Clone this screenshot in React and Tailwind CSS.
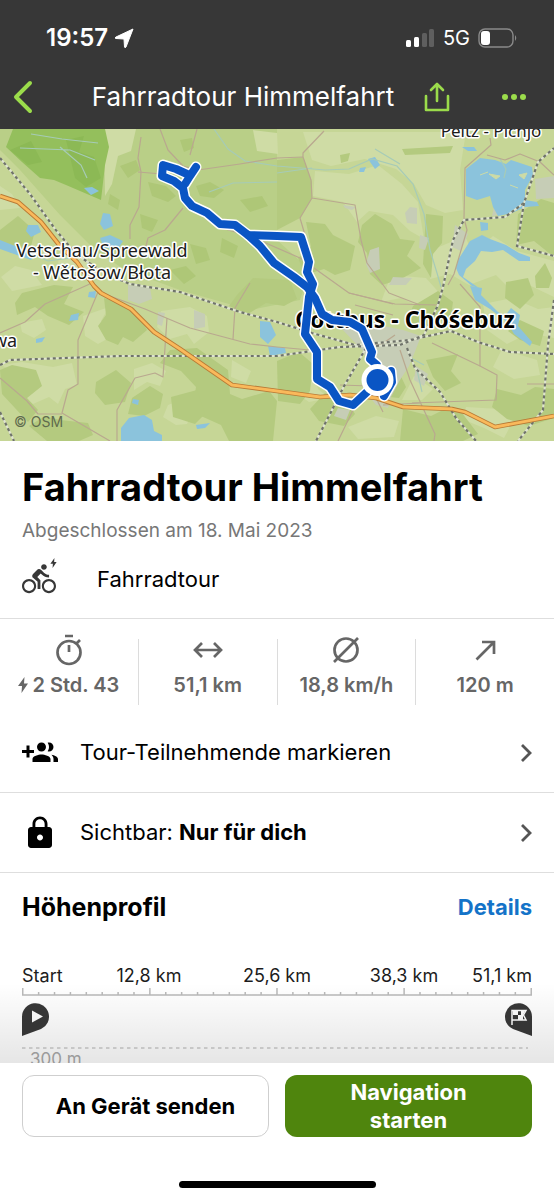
import React from 'react';
import { MdDirectionsBike, MdLock } from 'react-icons/md';

const ROUTE = [
  'M196 167L190 176L185 184',
  'M187 174L176 169L163 165L162 176L174 181L183 188L185 198L192 206L207 213L220 224L235 225L248 235L277 236L301 237L309 262L307 272L313 284L309 297L305 334L317 352L317 379L330 387L339 401L353 405L367 392L377 381',
  'M248 235L260 246L274 263L294 277L307 287L315 298L322 314L332 320L350 322L362 329L372 352L370 359L377 365L377 380',
  'M391 371L392 382L384 396',
];

const RAILWAYS = [
  'M0 158L30 194L55 229L76 254L104 273L130 284L180 292L240 312L277 322L312 333L355 345L410 340L451 331L478 342L510 352L554 354',
  'M0 365L10 360L120 356L277 356L340 347L400 345L424 335L438 305L443 287L453 240L464 220L505 217L524 203L538 162L554 148',
  'M524 203L517 246L554 256',
  'M407 348L415 368L440 392L456 418L476 441',
  'M366 348L343 388L331 412L316 441',
  'M554 300L548 345L543 410L518 441',
  'M0 412L14 441',
];

const MOTORWAY =
  'M0 196L18 202L41 222L60 246L77 262L94 286L101 293L131 309L154 332L180 349L232 385L277 391L320 397L350 395L376 398L403 407L452 409L465 412L495 427L554 416';

const ROADS = [
  'M141 137L138 158L141 172L139 207L130 225L130 239',
  'M160 129L168 150L183 166L198 170L240 164L277 158',
  'M197 129L190 155M138 172L162 174',
  'M183 208L165 230L148 238L145 250',
  'M192 208L225 229L252 237L300 258L349 293L393 304',
  'M324 131L303 153L303 157L311 180L312 198L300 218L305 235M312 198L355 205L361 240L367 263L389 293L420 305',
  'M490 138L491 145L465 168L464 218L467 230L454 274L448 285',
  'M487 155L505 160L520 154L540 162L554 175',
  'M0 333L25 322L45 304L92 283L98 292L78 340L78 384L68 390L62 413L110 441',
  'M99 292L145 309L190 328L250 344L277 347L310 350',
  'M0 378L27 401L38 414L62 414M117 441L117 410L135 378L155 373L163 377L167 318',
  'M250 283L235 308L233 339M349 293L395 304L437 305M460 284L480 307L480 366L497 375L496 400L412 403',
  'M400 350L410 380L435 434L434 441M355 305L393 315M432 343L480 366M383 405L420 403',
  'M340 347L382 344L395 335M340 385L370 386L383 412M338 441L353 410L370 394',
  'M527 384L554 384M277 158L303 157',
];

const FORESTS = [
  'M277 160L303 157L312 182L312 198L300 218L277 230Z',
  'M306 222L325 224L333 235L355 246L350 270L335 275L324 269L305 275L298 258L311 247Z',
  'M362 225L375 214L392 224L400 239L415 241L407 256L421 268L401 279L382 285L370 274L367 253L358 242Z',
  'M426 214L443 216L442 243L433 254L431 278L423 264Z',
  'M518 214L541 199L554 203V257L534 241L516 245Z',
  'M22 293L54 285L73 287L64 304L84 312L69 325L48 316L35 307L17 315L15 303Z',
  'M104 298L134 308L147 330L133 342L123 337L118 345L106 340L98 326L106 315Z',
  'M12 365L36 370L42 386L27 398L38 410L28 422L2 394L0 370Z',
  'M96 382L116 370L131 383L125 402L105 405L95 393Z',
  'M132 398L150 386L163 394L160 408L144 416L128 414Z',
  'M170 350L197 348L228 370L230 394L242 399L269 391L277 401L273 441L229 441L221 425L192 412L196 387L181 371L160 363Z',
  'M171 397L197 390L205 414L195 424L173 417Z',
  'M60 420L88 423L93 435L79 441L47 441L29 426L45 416Z',
  'M277 361L299 352L313 364L310 391L300 404L278 401Z',
  'M253 278L290 280L297 299L284 306L266 303L248 314L229 306L237 295Z',
  'M325 393L347 400L355 414L344 426L319 421L310 409Z',
  'M403 409L431 416L449 407L462 413L478 434L463 441L400 441Z',
  'M497 389L521 395L535 387L554 389V418L529 426L507 419L492 407Z',
  'M413 306L438 291L453 302L450 323L435 319L421 329L407 321Z',
  'M506 282L528 278L534 295L520 309L505 298Z',
  'M366 371L397 368L406 387L399 398L380 396L363 385Z',
  'M535 276L545 263L552 278L549 288L536 288Z',
  'M0 230L18 216L35 231L31 246L11 253L0 246Z',
  'M402 149L453 146L450 153L405 155ZM340 155L350 153L348 161L341 163Z',
  'M426 360L458 354L451 371L461 383L445 391L433 377ZM520 320L544 331L540 346L520 340L508 331Z',
];

const THICKETS = [
  'M120 166L136 160L140 170L128 178ZM148 182L166 186L176 196L168 202L152 196Z',
  'M196 186L210 182L224 190L214 198L200 196ZM180 140L192 138L194 148L184 152Z',
  'M110 194L120 200L118 210L108 204ZM140 214L158 220L152 232L142 228Z',
  'M190 244L206 248L210 260L196 264ZM222 238L238 246L234 258L220 252Z',
  'M170 270L186 266L196 276L184 284ZM240 200L262 196L268 206L250 212Z',
];

const MEADOWS = [
  'M104 129L136 129L131 151L118 156L112 184L105 196Z',
  'M0 186L12 194L20 208L0 210ZM61 246L85 251L91 267L70 274L58 263Z',
  'M20 323L42 319L46 330L34 338L22 332ZM83 316L109 307L101 321L118 333L98 344L85 336Z',
  'M1 365L22 362L53 367L72 363L77 385L65 389L58 404L49 397L33 404L13 390L20 375Z',
  'M134 369L152 363L166 371L160 386L147 382L134 390Z',
  'M168 405L186 398L194 407L187 424L176 425L163 417Z',
  'M161 311L190 307L207 316L209 332L194 344L187 334L170 339L157 327Z',
  'M237 399L244 400L243 418L251 423L247 436L235 438L239 420ZM232 360L251 371L246 383L231 377Z',
  'M253 130L277 133L278 154L257 151Z',
  'M303 132L466 132L460 170L463 210L445 213L426 205L414 184L396 169L365 159L331 166L312 160Z',
  'M315 171L349 174L378 165L402 184L418 202L424 239L410 231L393 215L369 211L357 222L343 202L313 196Z',
  'M432 250L465 236L473 254L493 236L517 251L554 261V297L531 286L514 293L496 275L469 285L450 274L430 279Z',
  'M391 275L426 278L443 297L424 309L401 298L381 302Z',
  'M483 304L512 298L538 309L554 307V338L529 333L507 344L487 330Z',
  'M414 376L433 389L422 400L402 400ZM499 409L513 421L504 438L484 428L462 419L466 407Z',
  'M300 365L314 374L318 389L329 398L309 402L296 393Z',
  'M348 427L376 416L399 421L394 437L358 439Z',
  'M15 266L31 270L42 285L12 291L1 277Z',
  'M502 349L537 360L540 375L514 379L493 367Z',
];

const BUILT = [
  'M128 285L150 288L152 299L139 304L128 300Z',
  'M410 207L417 208L417 224L407 223L405 213ZM370 250L379 247L380 269L370 273L366 264Z',
  'M535 179L554 176V198L536 199ZM393 277L412 278L406 285L389 285Z',
  'M342 329L369 323L403 330L421 336L414 354L409 366L400 380L391 397L388 408L376 405L363 388L372 369L362 350Z',
  'M194 310L205 314L205 327L194 329ZM343 205L356 207L352 210L345 208Z',
  'M455 225L468 234L461 251L452 247ZM495 202L503 204L502 214L492 216Z',
  'M420 235L429 238L425 250L419 248ZM158 312L165 313L162 326L157 324Z',
  'M416 366L428 374L424 386L414 380ZM338 408L350 410L346 420L334 416Z',
];

const LAKES = [
  'M466 169L480 158L495 160L506 164L511 160L532 167L533 175L525 190L525 200L537 202L539 206L525 207L512 213L498 216L493 207L490 196L477 200L466 196Z',
  'M480 222L488 223L488 230L481 231Z',
  'M458 260L470 241L482 235L490 239L506 245L519 253L530 257L530 261L519 261L503 250L492 252L481 251L475 261L466 269L463 277L479 288L472 286L459 275L456 268Z',
  'M470 286L482 288L481 295L498 312L505 316L511 308L520 315L518 326L532 342L530 346L514 334L507 322L490 309L475 300Z',
  'M103 213L110 214L113 226L104 230L100 224Z',
  'M84 188L92 187L99 191L91 195Z',
  'M28 225L38 225L41 232L31 237L26 231ZM0 240L20 248L36 254L31 260L0 249Z',
  'M100 238L110 235L123 241L118 249L104 248Z',
  'M121 428L129 418L144 415L152 420L154 431L162 435L162 441L121 441Z',
  'M260 321L270 322L276 335L268 344L260 337ZM268 346L285 348L286 353L270 356Z',
  'M71 315L79 313L78 320L69 321ZM89 292L96 291L95 298L88 297Z',
  'M133 399L139 400L138 405L132 403ZM36 339L45 337L42 342L36 343Z',
  'M368 159L375 157L380 165L375 169ZM360 168L366 167L364 172L359 172Z',
  'M462 147L474 147L477 151L468 151ZM196 425L210 423L205 428L197 429Z',
];

const STREAMS = [
  'M20 148L70 150L95 160M31 134L62 139L98 143M60 147L81 165L87 178',
  'M214 129L228 149L245 161L277 166L325 170L349 169L372 159L397 166L413 184L424 214L430 250L437 273L441 287',
  'M209 192L233 183L277 182M312 168L277 173M500 159L506 169L504 178',
  'M375 149L400 164M417 370L422 392M411 358L424 365M20 249L48 261L70 258',
];

const MapView = () => (
  <svg
    viewBox="0 129 554 312"
    className="block w-full bg-[#bfd18c]"
    role="img"
    aria-label="Karte der Fahrradtour"
  >
    <rect y="129" width="554" height="312" fill="#c6d696" />
    <path d="M0 129H277L277 240L310 270L300 300L250 310L180 290L125 270L95 250L60 215L20 170L0 150Z" fill="#b9cf87" />
    <g fill="#cfdca5">
      {MEADOWS.map((d) => <path key={d} d={d} />)}
    </g>
    <g fill="#b4ca7f">
      {FORESTS.map((d) => <path key={d} d={d} />)}
    </g>
    <g fill="#aec777">
      {THICKETS.map((d) => <path key={d} d={d} />)}
    </g>
    <path d="M6 147L13 129H105L109 147L105 165L101 200L66 185L54 180L40 178L22 162Z" fill="#94bf5c" />
    <path d="M66 140L84 136L79 152L94 157L101 178L86 187L75 178ZM10 150L31 141L42 162L28 165Z" fill="#8cb955" />
    <g fill="#c6cdb6">
      {BUILT.map((d) => <path key={d} d={d} />)}
    </g>
    <g fill="#8bc3dc">
      {LAKES.map((d) => <path key={d} d={d} />)}
    </g>
    <path d="M489 174L500 176L496 179ZM519 175L527 173L524 179ZM480 175L488 172M510 185L518 188" fill="#cddba6" stroke="#cddba6" />
    <g fill="none" stroke="#a6cbb7" strokeWidth="1.2">
      {STREAMS.map((d) => <path key={d} d={d} />)}
    </g>
    <g fill="none" stroke="#b9a88f" strokeWidth="1.2" strokeLinejoin="round">
      {ROADS.map((d) => <path key={d} d={d} />)}
    </g>
    {RAILWAYS.map((d) => (
      <g key={d} fill="none">
        <path d={d} stroke="#dfe4d0" strokeWidth="2" />
        <path d={d} stroke="#6f736a" strokeWidth="2.2" strokeDasharray="3 3" />
      </g>
    ))}
    <g fill="none" strokeLinejoin="round">
      <path d={MOTORWAY} stroke="#b97a35" strokeWidth="4.6" />
      <path d={MOTORWAY} stroke="#f9b95b" strokeWidth="2.8" />
    </g>
    <g
      fontFamily="'Noto Sans', sans-serif"
      fill="#1b1b1b"
      stroke="#ffffff"
      strokeWidth="3"
      strokeLinejoin="round"
      paintOrder="stroke"
      textAnchor="middle"
    >
      <text x="491" y="137" fontSize="17">Peitz - Picnjo</text>
      <text x="102" y="257" fontSize="18">Vetschau/Spreewald</text>
      <text x="102" y="279" fontSize="18">- Wětošow/Błota</text>
      <text x="5" y="347" fontSize="18">wa</text>
      <text x="405" y="328" fontSize="23" fontWeight="700" fill="#000000">Cottbus - Chóśebuz</text>
    </g>
    <g fill="none" strokeLinejoin="round" strokeLinecap="round">
      {ROUTE.map((d) => <path key={d} d={d} stroke="#ffffff" strokeWidth="11" />)}
      {ROUTE.map((d) => <path key={d} d={d} stroke="#0a55c4" strokeWidth="8" />)}
    </g>
    <circle cx="377.500" cy="380" r="16" fill="#ffffff" />
    <circle cx="377.500" cy="380" r="11" fill="#0a55c4" />
    <text x="14" y="427" fontSize="14" fontFamily="Inter, sans-serif" fill="#5f6b4d">© OSM</text>
  </svg>
);

const StatusBar = () => (
  <div className="flex h-16 items-center justify-between pt-3 pr-9 pl-[46px] text-white">
    <div className="flex items-center gap-1.5">
      <span className="text-[24px] font-semibold">19:57</span>
      <svg width="20" height="21" viewBox="0 0 20 21" aria-hidden="true">
        <path d="M19 1L12 19Q11 20.500 10.500 19L10 11L2 10.500Q0 10 2 9Z" fill="currentColor" stroke="currentColor" strokeWidth="1" strokeLinejoin="round" />
      </svg>
    </div>
    <div className="flex items-center gap-2">
      <svg width="29" height="20" viewBox="0 0 29 20" fill="currentColor" aria-hidden="true">
        <rect x="0" y="12" width="5" height="7" rx="1.500" />
        <rect x="8" y="9" width="5" height="10" rx="1.500" />
        <rect x="16" y="5" width="5" height="14" rx="1.500" opacity="0.2" />
        <rect x="23" y="1" width="5" height="18" rx="1.500" opacity="0.2" />
      </svg>
      <span className="text-[20px]">5G</span>
      <svg width="40" height="20" viewBox="0 0 40 20" aria-hidden="true">
        <rect x="1" y="1" width="34" height="18" rx="6" fill="none" stroke="#8a8a8a" strokeWidth="1.400" />
        <path d="M37 7Q39.500 10 37 13Z" fill="#8a8a8a" />
        <rect x="3" y="3" width="9" height="14" rx="3" fill="currentColor" />
      </svg>
    </div>
  </div>
);

const NavBar = () => (
  <div className="flex h-[65px] items-center pr-7 pl-3 text-[#9bdc4b]">
    <button type="button" aria-label="Zurück">
      <svg width="22" height="36" viewBox="0 0 22 36" fill="none" stroke="currentColor" strokeWidth="4" strokeLinecap="round" strokeLinejoin="round">
        <path d="M18 4L4 18L18 32" />
      </svg>
    </button>
    <span className="flex-1 pl-9 text-center text-[26px] whitespace-nowrap text-white">Fahrradtour Himmelfahrt</span>
    <button type="button" aria-label="Teilen" className="ml-2">
      <svg width="26" height="30" viewBox="0 0 26 30" fill="none" stroke="currentColor" strokeWidth="2.600" strokeLinecap="round" strokeLinejoin="round">
        <path d="M2 14V28H24V14M13 19V2M7 8L13 2L19 8" />
      </svg>
    </button>
    <button type="button" aria-label="Mehr" className="ml-[52px]">
      <svg width="24" height="8" viewBox="0 0 24 8" fill="currentColor">
        <circle cx="3" cy="4" r="3" />
        <circle cx="12" cy="4" r="3" />
        <circle cx="21" cy="4" r="3" />
      </svg>
    </button>
  </div>
);

const Bolt = ({ className }) => (
  <svg viewBox="0 0 10 16" className={className} fill="currentColor" aria-hidden="true">
    <path d="M6.500 0L0 9H4L3.500 16L10 6.500H6Z" />
  </svg>
);

const STATS = [
  {
    value: '2 Std. 43',
    electric: true,
    icon: <path d="M12 2H20M16 11V18M24 9L27 6M16 7A11.500 11.500 0 1 1 16 30A11.500 11.500 0 1 1 16 7" />,
  },
  {
    value: '51,1 km',
    icon: <path d="M3.500 16H28.500M10 9L3 16L10 23M22 9L29 16L22 23" />,
  },
  {
    value: '18,8 km/h',
    icon: <path d="M4 28L28 4M16 4.500A11.500 11.500 0 1 1 16 27.500A11.500 11.500 0 1 1 16 4.500" />,
  },
  {
    value: '120 m',
    icon: <path d="M7.500 25.500L24.500 8.500M13 8H25V20" />,
  },
];

const Stats = () => (
  <div className="flex pt-3 text-[#666666]">
    {STATS.map((stat, i) => (
      <React.Fragment key={stat.value}>
        {i > 0 && <span className="my-2 w-px bg-[#dcdcdc]" />}
        <div className="flex flex-1 flex-col items-center pb-3">
          <div className="flex h-[38px] items-center">
            <svg width="32" height="32" viewBox="0 0 32 32" fill="none" stroke="currentColor" strokeWidth="2.700">
              {stat.icon}
            </svg>
          </div>
          <div className="flex items-center gap-1 text-[20px] leading-8 font-semibold whitespace-nowrap">
            {stat.electric && <Bolt className="h-4 w-[10px]" />}
            {stat.value}
          </div>
        </div>
      </React.Fragment>
    ))}
  </div>
);

const Row = ({ icon, children }) => (
  <button type="button" className="flex h-20 w-full items-center border-b border-[#dedede] px-[22px] text-left text-[22px] text-black">
    <span className="flex w-[58px] items-center">{icon}</span>
    <span className="flex-1">{children}</span>
    <svg width="12" height="20" viewBox="0 0 12 20" fill="none" stroke="#555555" strokeWidth="2.800" aria-hidden="true">
      <path d="M2 2L10 10L2 18" />
    </svg>
  </button>
);

const AXIS_LABELS = [
  { x: 0, text: 'Start', anchor: 'start' },
  { x: 127, text: '12,8 km', anchor: 'middle' },
  { x: 255, text: '25,6 km', anchor: 'middle' },
  { x: 382, text: '38,3 km', anchor: 'middle' },
  { x: 510, text: '51,1 km', anchor: 'end' },
];

const ElevationProfile = () => (
  <svg viewBox="0 0 510 110" className="block w-full" role="img" aria-label="Höhenprofil">
    <g fontFamily="Inter, sans-serif" fontSize="18" fill="#1c1c1c">
      {AXIS_LABELS.map((label) => (
        <text key={label.text} x={label.x} y="24" textAnchor={label.anchor}>{label.text}</text>
      ))}
    </g>
    <g stroke="#b9b9b9" strokeWidth="1.500">
      <path d="M0 37H510" />
      {Array.from({ length: 33 }, (_, i) => {
        const x = 0.75 + i * 15.89;
        return <path key={i} d={`M${x} 37V${i % 8 === 0 ? 30 : 34}`} />;
      })}
    </g>
    <path d="M0 78V58.500A13.500 13.500 0 1 1 19 71Z" fill="#383838" />
    <path d="M10 52.500L21 58.500L10 64.500Z" fill="#ffffff" />
    <path d="M510 78V58.500A13.500 13.500 0 1 0 491 71Z" fill="#383838" />
    <g fill="none" stroke="#ffffff" strokeWidth="1.500">
      <path d="M490 67V52.500H504L501.500 57L504 62H490" />
      <path d="M491 52.500H496V57H491ZM496 57H501V62H496ZM499 53H503L501 57H499Z" fill="#ffffff" stroke="none" />
    </g>
    <path d="M0 90H506" stroke="#cccccc" strokeWidth="1.300" strokeDasharray="3.500 3.500" />
    <text x="8" y="107" fontFamily="Inter, sans-serif" fontSize="17" fill="#aaaaaa">300 m</text>
  </svg>
);

const App = () => (
  <div className="flex h-screen flex-col bg-white font-[Inter,sans-serif] text-black">
    <header className="shrink-0 bg-[#373737]">
      <StatusBar />
      <NavBar />
    </header>

    <div className="relative min-h-0 flex-1">
      <main className="h-full overflow-y-auto [scrollbar-width:none]">
        <MapView />

        <section className="border-b border-[#dedede] px-[22px] pt-[26px] pb-[19px]">
          <h1 className="text-[38px] leading-10 font-bold whitespace-nowrap">Fahrradtour Himmelfahrt</h1>
          <p className="mt-3 text-[19px] leading-6 text-[#777777]">Abgeschlossen am 18. Mai 2023</p>
          <div className="mt-4 flex h-10 items-center">
            <div className="relative w-[75px] text-[#383838]">
              <MdDirectionsBike className="size-[34px]" />
              <Bolt className="absolute -top-1 left-7 h-[10px] w-[7px]" />
            </div>
            <span className="text-[22px]">Fahrradtour</span>
          </div>
        </section>

        <Stats />

        <Row
          icon={
            <svg width="36" height="36" viewBox="0 0 24 24" fill="currentColor" aria-hidden="true">
              <path d="M8 10H5V7H3v3H0v2h3v3h2v-3h3v-2zm10 1c1.660 0 2.990-1.340 2.990-3S19.660 5 18 5c-.320 0-.630.050-.910.140.570.810.900 1.790.900 2.860s-.340 2.040-.900 2.860c.280.090.590.140.910.140zm-5 0c1.660 0 2.990-1.340 2.990-3S14.660 5 13 5c-1.660 0-3 1.340-3 3s1.340 3 3 3zm6.620 2.160c.830.730 1.380 1.660 1.380 2.840v2h3v-2c0-1.540-2.370-2.490-4.380-2.840zM13 13c-2 0-6 1-6 3v2h12v-2c0-2-4-3-6-3z" />
            </svg>
          }
        >
          Tour-Teilnehmende markieren
        </Row>
        <Row icon={<MdLock className="size-9" />}>
          Sichtbar: <strong className="font-bold">Nur für dich</strong>
        </Row>

        <section className="px-[22px]">
          <div className="flex h-[69px] items-center justify-between font-bold">
            <h2 className="text-[25px]">Höhenprofil</h2>
            <a href="#details" className="text-[22px] text-[#1473c8]">Details</a>
          </div>
          <div className="pt-4">
            <ElevationProfile />
          </div>
        </section>
      </main>
      <div className="pointer-events-none absolute inset-x-0 bottom-0 h-20 bg-linear-to-b from-transparent to-black/10" />
    </div>

    <footer className="shrink-0 bg-white px-[22px] pt-3 pb-3">
      <div className="grid grid-cols-2 gap-4 text-[22px] leading-7 font-bold">
        <button type="button" className="h-[62px] rounded-xl border border-[#cfcfcf]">An Gerät senden</button>
        <button type="button" className="h-[62px] rounded-xl bg-[#4f850d] px-12 text-white">Navigation starten</button>
      </div>
      <div className="mx-auto mt-11 h-[7px] w-[197px] rounded-full bg-black" />
    </footer>
  </div>
);

export default App;
